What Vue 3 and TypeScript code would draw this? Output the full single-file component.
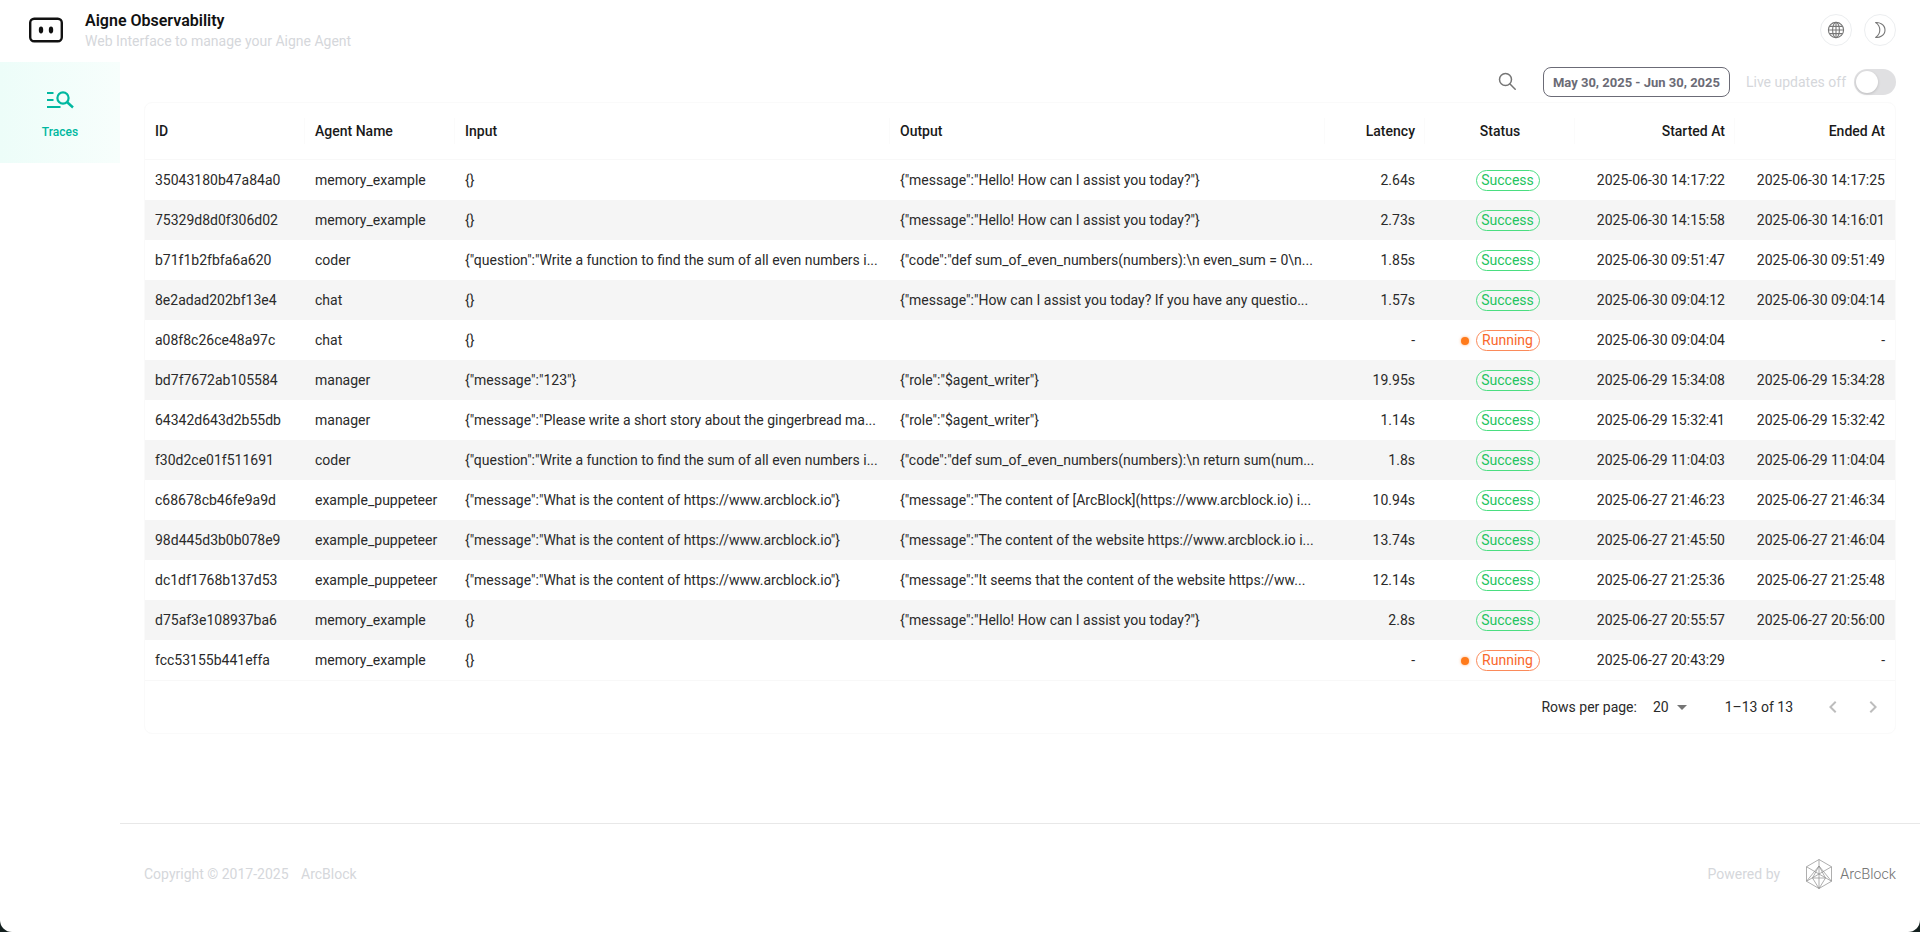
<template>
  <div class="page">
    <header class="top">
      <svg class="logo" viewBox="0 0 36 26" width="36" height="26" fill="none">
        <rect x="2.200" y="1.700" width="31.600" height="22.600" rx="4" stroke="#111" stroke-width="2.400" />
        <ellipse cx="13" cy="13" rx="2.200" ry="3.400" fill="#111" />
        <ellipse cx="23" cy="13" rx="2.200" ry="3.400" fill="#111" />
      </svg>
      <div class="brand">
        <div class="brand-title">Aigne Observability</div>
        <div class="brand-sub">Web Interface to manage your Aigne Agent</div>
      </div>
      <div class="top-actions">
        <button class="round-btn" type="button" aria-label="Language">
          <svg viewBox="0 0 18 18" width="18" height="18" fill="none" stroke="#777" stroke-width="1.1">
            <circle cx="9" cy="9" r="7.6" />
            <ellipse cx="9" cy="9" rx="3.4" ry="7.6" />
            <path d="M9 1.4v15.2M1.4 9h15.2M2.4 5.4h13.2M2.4 12.6h13.2" />
          </svg>
        </button>
        <button class="round-btn" type="button" aria-label="Theme">
          <svg viewBox="0 0 18 18" width="18" height="18" fill="none" stroke="#777" stroke-width="1.1" stroke-linejoin="round">
            <path d="M4.6 1.6c3.4-.5 9.4 1.6 9.4 7.4 0 5.8-6 7.900-9.400 7.400 2.700-1.700 4.200-4.300 4.200-7.400 0-3.100-1.500-5.700-4.200-7.400z" />
          </svg>
        </button>
      </div>
    </header>

    <div class="body">
      <aside class="side">
        <div class="nav-item">
          <svg viewBox="0 0 28 20" width="28" height="20" fill="none" stroke="#00b8a0" stroke-width="2.2">
            <path d="M1 3h6.500M1 10h6.500M1 17h13.500" />
            <circle cx="17" cy="8" r="5.600" />
            <path d="M21 12l6 5.500" stroke-width="2.400" />
          </svg>
          <span>Traces</span>
        </div>
      </aside>

      <main class="main">
        <div class="toolbar">
          <svg class="search" viewBox="0 0 18 18" width="18" height="18" fill="none" stroke="#757575" stroke-width="1.500">
            <circle cx="7.500" cy="7.500" r="6" />
            <path d="M12 12l5.200 5.200" stroke-linecap="round" />
          </svg>
          <button class="date-btn" type="button">May 30, 2025 - Jun 30, 2025</button>
          <span class="live-label">Live updates off</span>
          <span class="switch"><span class="knob"></span></span>
        </div>

        <div class="card">
          <table class="grid">
            <colgroup>
              <col class="c-id" />
              <col class="c-agent" />
              <col class="c-text" />
              <col class="c-text" />
              <col class="c-latency" />
              <col class="c-status" />
              <col class="c-time" />
              <col class="c-time" />
            </colgroup>
            <thead>
              <tr>
                <th>ID</th>
                <th>Agent Name</th>
                <th>Input</th>
                <th>Output</th>
                <th class="right">Latency</th>
                <th class="center">Status</th>
                <th class="right">Started At</th>
                <th class="right">Ended At</th>
              </tr>
            </thead>
            <tbody>
              <tr v-for="row in rows" :key="row.id">
                <td>{{ row.id }}</td>
                <td>{{ row.agent }}</td>
                <td>{{ row.input }}</td>
                <td>{{ row.output }}</td>
                <td class="right">{{ row.latency }}</td>
                <td>
                  <div class="status-cell">
                    <span :class="['dot', { on: row.running }]"></span>
                    <span :class="['badge', row.running ? 'running' : 'success']">
                      {{ row.running ? "Running" : "Success" }}
                    </span>
                  </div>
                </td>
                <td class="right">{{ row.started }}</td>
                <td class="right">{{ row.ended }}</td>
              </tr>
            </tbody>
          </table>
          <div class="pager">
            <span>Rows per page:</span>
            <span class="per-page">20<i class="caret"></i></span>
            <span class="range">1–13 of 13</span>
            <button class="page-btn" type="button" aria-label="Previous">
              <svg viewBox="0 0 24 24" width="24" height="24"><path d="M15.410 7.410 14 6l-6 6 6 6 1.410-1.410L10.830 12z" fill="#bdbdbd" /></svg>
            </button>
            <button class="page-btn" type="button" aria-label="Next">
              <svg viewBox="0 0 24 24" width="24" height="24"><path d="M10 6 8.590 7.410 13.170 12l-4.580 4.590L10 18l6-6z" fill="#bdbdbd" /></svg>
            </button>
          </div>
        </div>

        <footer class="foot">
          <span class="copy">Copyright © 2017-2025 <span class="owner">ArcBlock</span></span>
          <div class="powered">
            <span class="copy">Powered by</span>
            <svg class="hex" viewBox="0 0 26 30" width="26" height="30" fill="none" stroke="#8c8c8c" stroke-width="0.700">
              <path d="M13 .5 25.500 7.750v14.500L13 29.500.5 22.250V7.750z" />
              <path d="M13 .5v29M.5 7.750l25 14.500M25.500 7.750l-25 14.500" />
              <path d="M13 7 19.500 19H6.500z" />
              <path d="M.5 22.250 13 7l12.500 15.250M6.500 19 13 29.500 19.500 19" />
            </svg>
            <span class="arc">ArcBlock</span>
          </div>
        </footer>
      </main>
    </div>
  </div>
</template>

<script setup lang="ts">
interface TraceRow {
  id: string;
  agent: string;
  input: string;
  output: string;
  latency: string;
  started: string;
  ended: string;
  running?: boolean;
}

const hello = '{"message":"Hello! How can I assist you today?"}';
const sumQuestion = '{"question":"Write a function to find the sum of all even numbers i...';
const arcQuestion = '{"message":"What is the content of https://www.arcblock.io"}';
const writer = '{"role":"$agent_writer"}';

const rows: TraceRow[] = [
  { id: "35043180b47a84a0", agent: "memory_example", input: "{}", output: hello, latency: "2.64s", started: "2025-06-30 14:17:22", ended: "2025-06-30 14:17:25" },
  { id: "75329d8d0f306d02", agent: "memory_example", input: "{}", output: hello, latency: "2.73s", started: "2025-06-30 14:15:58", ended: "2025-06-30 14:16:01" },
  { id: "b71f1b2fbfa6a620", agent: "coder", input: sumQuestion, output: '{"code":"def sum_of_even_numbers(numbers):\\n even_sum = 0\\n...', latency: "1.85s", started: "2025-06-30 09:51:47", ended: "2025-06-30 09:51:49" },
  { id: "8e2adad202bf13e4", agent: "chat", input: "{}", output: '{"message":"How can I assist you today? If you have any questio...', latency: "1.57s", started: "2025-06-30 09:04:12", ended: "2025-06-30 09:04:14" },
  { id: "a08f8c26ce48a97c", agent: "chat", input: "{}", output: "", latency: "-", started: "2025-06-30 09:04:04", ended: "-", running: true },
  { id: "bd7f7672ab105584", agent: "manager", input: '{"message":"123"}', output: writer, latency: "19.95s", started: "2025-06-29 15:34:08", ended: "2025-06-29 15:34:28" },
  { id: "64342d643d2b55db", agent: "manager", input: '{"message":"Please write a short story about the gingerbread ma...', output: writer, latency: "1.14s", started: "2025-06-29 15:32:41", ended: "2025-06-29 15:32:42" },
  { id: "f30d2ce01f511691", agent: "coder", input: sumQuestion, output: '{"code":"def sum_of_even_numbers(numbers):\\n return sum(num...', latency: "1.8s", started: "2025-06-29 11:04:03", ended: "2025-06-29 11:04:04" },
  { id: "c68678cb46fe9a9d", agent: "example_puppeteer", input: arcQuestion, output: '{"message":"The content of [ArcBlock](https://www.arcblock.io) i...', latency: "10.94s", started: "2025-06-27 21:46:23", ended: "2025-06-27 21:46:34" },
  { id: "98d445d3b0b078e9", agent: "example_puppeteer", input: arcQuestion, output: '{"message":"The content of the website https://www.arcblock.io i...', latency: "13.74s", started: "2025-06-27 21:45:50", ended: "2025-06-27 21:46:04" },
  { id: "dc1df1768b137d53", agent: "example_puppeteer", input: arcQuestion, output: '{"message":"It seems that the content of the website https://ww...', latency: "12.14s", started: "2025-06-27 21:25:36", ended: "2025-06-27 21:25:48" },
  { id: "d75af3e108937ba6", agent: "memory_example", input: "{}", output: hello, latency: "2.8s", started: "2025-06-27 20:55:57", ended: "2025-06-27 20:56:00" },
  { id: "fcc53155b441effa", agent: "memory_example", input: "{}", output: "", latency: "-", started: "2025-06-27 20:43:29", ended: "-", running: true },
];
</script>

<style>
html,
body {
  margin: 0;
  background: #14201f;
  overflow: hidden;
}
</style>

<style scoped>
.page {
  height: 932px;
  display: flex;
  flex-direction: column;
  background: #fff;
  border-radius: 0 0 12px 12px;
  font-family: Roboto, "Liberation Sans", sans-serif;
  font-size: 14px;
  color: #2a2a2a;
  overflow: hidden;
}

.top {
  height: 62px;
  flex: none;
  display: flex;
  align-items: center;
  padding: 0 24px 2px 28px;
  box-sizing: border-box;
}

.logo {
  flex: none;
}

.brand {
  margin-left: 21px;
  padding-top: 2px;
}

.brand-title {
  font-size: 16px;
  font-weight: 600;
  line-height: 20px;
  color: #111;
}

.brand-sub {
  font-size: 14px;
  line-height: 20px;
  color: #d5d7db;
}

.top-actions {
  margin-left: auto;
  display: flex;
  gap: 12px;
}

.round-btn {
  width: 32px;
  height: 32px;
  padding: 0;
  display: flex;
  align-items: center;
  justify-content: center;
  background: #fff;
  border: 1px solid #eceef0;
  border-radius: 50%;
}

.body {
  flex: 1;
  min-height: 0;
  display: flex;
}

.side {
  width: 120px;
  flex: none;
}

.nav-item {
  height: 101px;
  box-sizing: border-box;
  padding-top: 4px;
  display: flex;
  flex-direction: column;
  align-items: center;
  justify-content: center;
  gap: 15px;
  background: linear-gradient(90deg, #edfdf9 0%, #f7fefc 100%);
  color: #00b8a0;
  font-size: 12px;
  font-weight: 500;
}

.main {
  flex: 1;
  min-width: 0;
  display: flex;
  flex-direction: column;
}

.toolbar {
  height: 40px;
  flex: none;
  padding: 0 24px;
  display: flex;
  align-items: center;
  justify-content: flex-end;
}

.search {
  margin: 0 27px 2px 0;
}

.date-btn {
  height: 30px;
  width: 187px;
  padding: 0;
  background: #fff;
  border: 1px solid #6b6b76;
  border-radius: 8px;
  font-family: inherit;
  font-size: 13px;
  font-weight: 700;
  color: #6b6b76;
}

.live-label {
  margin-left: 16px;
  color: #d5d7db;
}

.switch {
  margin-left: 8px;
  width: 42px;
  height: 26px;
  padding: 2px;
  box-sizing: border-box;
  display: block;
  background: #e0e0e2;
  border-radius: 13px;
}

.knob {
  display: block;
  width: 22px;
  height: 22px;
  background: #fff;
  border-radius: 50%;
  box-shadow: 0 1px 3px rgba(0, 0, 0, 0.16);
}

.card {
  margin: 0 24px;
  border: 1px solid #fafafa;
  border-radius: 8px;
  overflow: hidden;
}

.grid {
  width: 100%;
  table-layout: fixed;
  border-collapse: collapse;
}

.c-id,
.c-time {
  width: 160px;
}

.c-agent,
.c-status {
  width: 150px;
}

.c-text {
  width: 435px;
}

.c-latency {
  width: 100px;
}

.grid th {
  position: relative;
  height: 56px;
  padding: 0 10px;
  border-bottom: 1px solid #f8f8f8;
  text-align: left;
  font-weight: 500;
  color: #1a1a1a;
}

.grid th:not(:last-child)::after {
  content: "";
  position: absolute;
  top: 15px;
  bottom: 15px;
  right: 0;
  width: 1px;
  background: #fbfbfb;
}

.grid td {
  height: 40px;
  padding: 0 10px;
  white-space: nowrap;
  overflow: hidden;
}

.grid tbody tr:nth-child(even) {
  background: #f5f5f5;
}

.grid tbody tr:last-child {
  border-bottom: 1px solid #f8f8f8;
}

.grid .right {
  text-align: right;
}

.grid .center {
  text-align: center;
}

.status-cell {
  display: flex;
  align-items: center;
  justify-content: center;
  gap: 7px;
  padding-top: 1px;
}

.dot {
  width: 8px;
  height: 8px;
  border-radius: 50%;
}

.dot.on {
  background: #ff7a1a;
  box-shadow: 0 0 3px rgba(255, 122, 26, 0.6);
}

.badge {
  box-sizing: border-box;
  width: 64px;
  height: 21px;
  border: 1px solid;
  border-radius: 11px;
  text-align: center;
  font-size: 14px;
  line-height: 19px;
}

.badge.success {
  color: #1fc45f;
  border-color: #4ade80;
}

.badge.running {
  color: #f9682c;
  border-color: #fb8a5a;
}

.pager {
  height: 52px;
  display: flex;
  align-items: center;
  justify-content: flex-end;
  padding-right: 2px;
}

.per-page {
  display: flex;
  align-items: center;
  margin-left: 16px;
}

.caret {
  margin-left: 8px;
  border-left: 5px solid transparent;
  border-right: 5px solid transparent;
  border-top: 5px solid #757575;
}

.range {
  margin-left: 38px;
  margin-right: 20px;
}

.page-btn {
  width: 40px;
  height: 40px;
  padding: 0;
  display: flex;
  align-items: center;
  justify-content: center;
  background: none;
  border: 0;
}

.foot {
  margin-top: auto;
  height: 99px;
  margin-bottom: 9px;
  padding: 0 24px;
  flex: none;
  display: flex;
  align-items: center;
  justify-content: space-between;
  border-top: 1px solid #e8e8e8;
}

.copy {
  color: #d5d7db;
}

.owner {
  margin-left: 9px;
}

.powered {
  display: flex;
  align-items: center;
}

.hex {
  margin-left: 26px;
}

.arc {
  margin-left: 8px;
  font-family: Inter, sans-serif;
  font-size: 14px;
  font-weight: 300;
  letter-spacing: -0.25px;
  color: #777;
}
</style>
